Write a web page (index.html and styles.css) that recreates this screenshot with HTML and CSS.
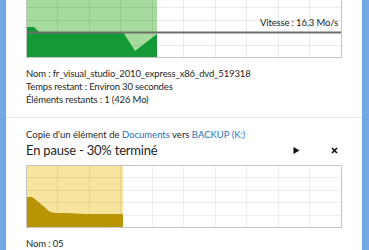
FILE: index.html
```html
<!DOCTYPE html>
<html lang="fr">
<head>
<meta charset="utf-8">
<link rel="stylesheet" href="styles.css">
</head>
<body>
<div class="window">
  <div class="edge edge-left"></div>
  <main class="content">
    <section class="job job-first">
      <div class="graph">
        <svg class="graph-svg" width="316" height="63" viewBox="0 0 316 63">
          <rect x="0" y="0" width="131" height="63" fill="#a5dc9e"/>
          <g stroke="#000" stroke-opacity="0.08" stroke-width="1">
            <line x1="31.5" y1="0" x2="31.5" y2="63"/>
            <line x1="63.5" y1="0" x2="63.5" y2="63"/>
            <line x1="94.5" y1="0" x2="94.5" y2="63"/>
            <line x1="126.5" y1="0" x2="126.5" y2="63"/>
            <line x1="157.5" y1="0" x2="157.5" y2="63"/>
            <line x1="189.5" y1="0" x2="189.5" y2="63"/>
            <line x1="220.5" y1="0" x2="220.5" y2="63"/>
            <line x1="252.5" y1="0" x2="252.5" y2="63"/>
            <line x1="283.5" y1="0" x2="283.5" y2="63"/>
            <line x1="0" y1="12.5" x2="316" y2="12.5"/>
            <line x1="0" y1="25.5" x2="316" y2="25.5"/>
            <line x1="0" y1="37.5" x2="316" y2="37.5"/>
            <line x1="0" y1="50.5" x2="316" y2="50.5"/>
          </g>
          <polygon points="0,32 8,32 14,38 87,38 90,37 97,37 109,56 131,39 131,63 0,63" fill="#139a36"/>
          <rect x="0" y="36.5" width="316" height="2" fill="#6e6e6e"/>
          <rect x="0.5" y="0.5" width="315" height="62" fill="none" stroke="#c4c4c4"/>
        </svg>
        <span class="speed">Vitesse : 16,3 Mo/s</span>
      </div>
      <div class="details">
        <div>Nom : fr_visual_studio_2010_express_x86_dvd_519318</div>
        <div>Temps restant : Environ 30 secondes</div>
        <div>Éléments restants : 1 (426 Mo)</div>
      </div>
    </section>
    <hr class="divider">
    <section class="job">
      <div class="caption">Copie d'un élément de <span class="link">Documents</span> vers <span class="link">BACKUP (K:)</span></div>
      <div class="head">
        <div class="status">En pause - 30% terminé</div>
        <div class="actions">
          <svg class="icon" width="7" height="7" viewBox="0 0 7 7"><polygon points="0.5,0 6.5,3.5 0.5,7" fill="#111"/></svg>
          <svg class="icon" width="7" height="7" viewBox="0 0 7 7"><path d="M1 1 L6 6 M6 1 L1 6" stroke="#111" stroke-width="1.7"/></svg>
        </div>
      </div>
      <div class="graph">
        <svg class="graph-svg" width="316" height="63" viewBox="0 0 316 63">
          <rect x="0" y="0" width="97" height="63" fill="#f7e59e"/>
          <g stroke="#000" stroke-opacity="0.07" stroke-width="1">
            <line x1="31.5" y1="0" x2="31.5" y2="63"/>
            <line x1="63.5" y1="0" x2="63.5" y2="63"/>
            <line x1="94.5" y1="0" x2="94.5" y2="63"/>
            <line x1="126.5" y1="0" x2="126.5" y2="63"/>
            <line x1="157.5" y1="0" x2="157.5" y2="63"/>
            <line x1="189.5" y1="0" x2="189.5" y2="63"/>
            <line x1="220.5" y1="0" x2="220.5" y2="63"/>
            <line x1="252.5" y1="0" x2="252.5" y2="63"/>
            <line x1="283.5" y1="0" x2="283.5" y2="63"/>
            <line x1="0" y1="12.5" x2="316" y2="12.5"/>
            <line x1="0" y1="25.5" x2="316" y2="25.5"/>
            <line x1="0" y1="37.5" x2="316" y2="37.5"/>
            <line x1="0" y1="50.5" x2="316" y2="50.5"/>
          </g>
          <polygon points="0,32 6,32 10,35 16,40 24,47 30,48 40,48 60,49 97,49 97,63 0,63" fill="#b99405"/>
          <rect x="0.5" y="0.5" width="315" height="62" fill="none" stroke="#c4c4c4"/>
        </svg>
      </div>
      <div class="details">
        <div>Nom : 05</div>
      </div>
    </section>
  </main>
  <div class="edge edge-right"></div>
</div>
</body>
</html>
```

FILE: styles.css
```css
html, body {
  margin: 0;
  padding: 0;
  background: #ffffff;
}

body {
  width: 369px;
  height: 250px;
  overflow: hidden;
  font-family: "Lato", "Noto Sans", sans-serif;
  color: #1f1f1f;
}

.window {
  display: flex;
  height: 250px;
}

.edge {
  flex: none;
  background: #72a8e8;
}

.edge-left {
  width: 6px;
}

.edge-right {
  width: 7px;
}

.content {
  flex: 1;
  display: flex;
  flex-direction: column;
  min-width: 0;
}

.job {
  padding: 0 20px;
}

.job-first {
  margin-top: -5px;
}

.graph {
  position: relative;
  width: 316px;
  height: 63px;
}

.graph-svg {
  display: block;
}

.speed {
  position: absolute;
  right: 4px;
  top: 22px;
  font-size: 9.5px;
  line-height: 12px;
  letter-spacing: -0.15px;
  color: #222;
}

.details {
  margin-top: 9px;
  font-size: 9.5px;
  line-height: 13px;
  letter-spacing: -0.15px;
}

.divider {
  margin: 11px 0 0;
  border: 0;
  border-top: 1px solid #e4e4e4;
  height: 0;
}

.caption {
  margin-top: 10px;
  font-size: 9.5px;
  line-height: 13px;
  letter-spacing: 0;
}

.link {
  color: #2a6fb6;
}

.head {
  display: flex;
  align-items: center;
  justify-content: space-between;
  margin: 0 0 6px;
}

.status {
  font-size: 13px;
  line-height: 18px;
  letter-spacing: -0.2px;
}

.actions {
  display: flex;
  gap: 31px;
  padding-right: 4px;
}

.icon {
  display: block;
}
```
